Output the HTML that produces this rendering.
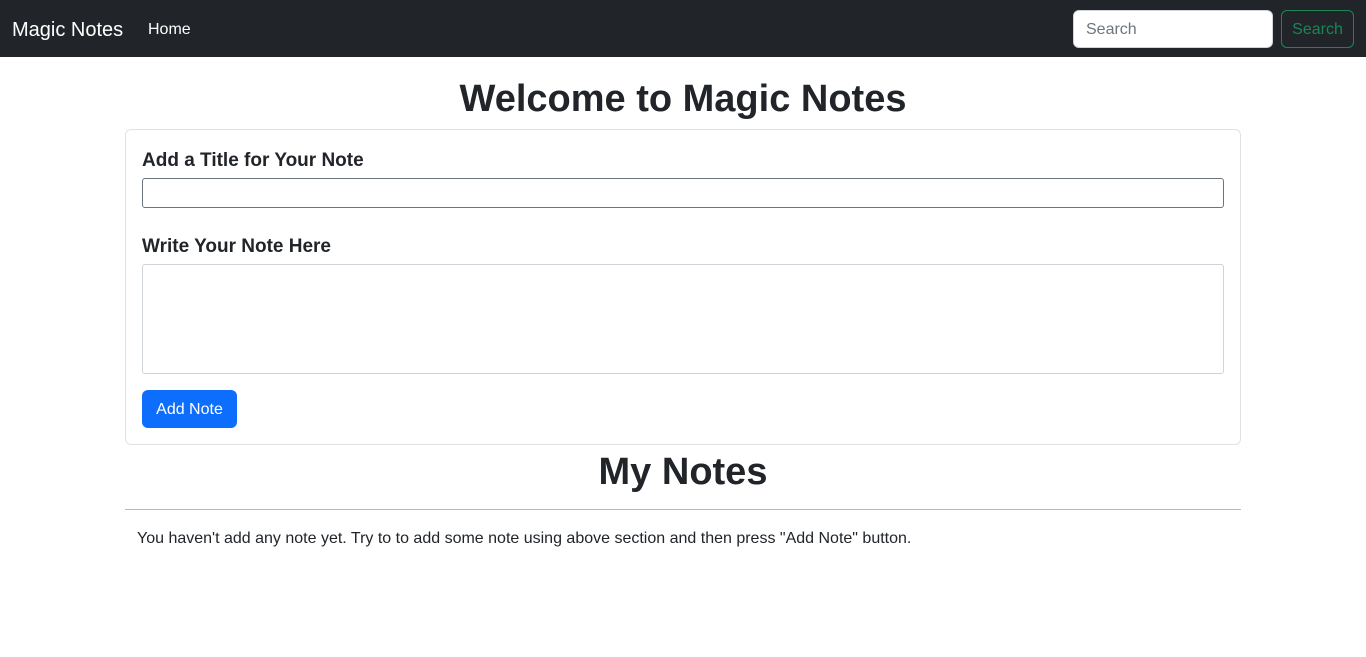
<!DOCTYPE html>
<html><head><style>
*{box-sizing:border-box;margin:0;padding:0}
body{width:1366px;height:657px;background:#fff;font-family:"Liberation Sans",sans-serif;color:#212529;position:relative;overflow:hidden}
.nav{position:absolute;left:0;top:0;width:1366px;height:57px;background:#212529}
.brand{position:absolute;left:12px;top:19px;font-size:20px;color:#fff}
.home{position:absolute;left:148px;top:21px;font-size:16px;color:#fff}
.sin{position:absolute;left:1073px;top:10px;width:200px;height:38px;background:#fff;border:1px solid #ced4da;border-radius:6px;font-size:16px;color:#6c757d;padding:10px 12px}
.sbtn{position:absolute;left:1281px;top:10px;width:73px;height:38px;border:1px solid #198754;border-radius:6px;color:#198754;font-size:16px;text-align:center;line-height:38px}
h1{position:absolute;left:0;width:1366px;text-align:center;font-weight:bold;font-size:38px;top:78px}
.card{position:absolute;left:125px;top:129px;width:1116px;height:316px;border:1px solid #dee2e6;border-radius:6px}
.lbl{position:absolute;left:142px;font-size:19px;font-weight:bold}
.in{position:absolute;left:142px;width:1082px;border:1px solid #6c757d;border-radius:3px}
.btn{position:absolute;left:142px;top:390px;width:95px;height:38px;background:#0d6efd;color:#fff;border-radius:6px;font-size:16px;text-align:center;line-height:40px}
h2{position:absolute;left:0;width:1366px;text-align:center;font-weight:bold;font-size:38px;top:451px}
hr{position:absolute;left:125px;top:509px;width:1116px;border:0;border-top:1px solid #bbb}
.msg{position:absolute;left:137px;top:530px;font-size:16px}
</style></head><body>
<div class="nav"><div class="brand">Magic Notes</div><div class="home">Home</div><div class="sin">Search</div><div class="sbtn">Search</div></div>
<h1>Welcome to Magic Notes</h1>
<div class="card"></div>
<div class="lbl" style="top:150px">Add a Title for Your Note</div>
<div class="in" style="top:178px;height:30px"></div>
<div class="lbl" style="top:236px">Write Your Note Here</div>
<div class="in" style="top:264px;height:110px;border-color:#ced4da"></div>
<div class="btn">Add Note</div>
<h2>My Notes</h2>
<hr>
<div class="msg">You haven't add any note yet. Try to to add some note using above section and then press "Add Note" button.</div>
</body></html>
